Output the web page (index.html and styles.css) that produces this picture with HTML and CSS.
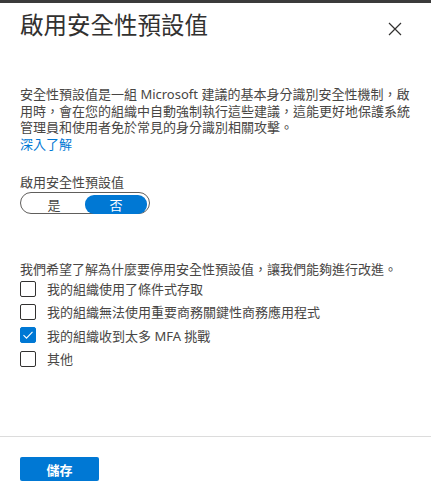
FILE: index.html
```html
<!DOCTYPE html>
<html lang="zh-Hant">
<head>
    <meta charset="UTF-8">
    <meta name="viewport" content="width=device-width, initial-scale=1.0">
    <title>啟用安全性預設值</title>
    <link rel="stylesheet" href="styles.css">
</head>
<body>
    <div class="top-bar"></div>
    <div class="panel">
        <div class="panel-body">
            <div class="header">
                <h1 class="title">啟用安全性預設值</h1>
                <button class="close-btn" aria-label="關閉">
                    <svg width="14" height="14" viewBox="0 0 14 14">
                        <path d="M1 1 L13 13 M13 1 L1 13" stroke="#323130" stroke-width="1.2" fill="none"/>
                    </svg>
                </button>
            </div>

            <p class="intro">安全性預設值是一組 Microsoft 建議的基本身分識別安全性機制，啟用時，會在您的組織中自動強制執行這些建議，這能更好地保護系統管理員和使用者免於常見的身分識別相關攻擊。</p>
            <a href="#" class="learn-more">深入了解</a>

            <div class="field">
                <div class="field-label">啟用安全性預設值</div>
                <div class="toggle">
                    <span class="toggle-option">是</span>
                    <span class="toggle-option active">否</span>
                </div>
            </div>

            <div class="feedback">
                <p class="question">我們希望了解為什麼要停用安全性預設值，讓我們能夠進行改進。</p>
                <label class="check-row"><span class="checkbox"></span>我的組織使用了條件式存取</label>
                <label class="check-row"><span class="checkbox"></span>我的組織無法使用重要商務關鍵性商務應用程式</label>
                <label class="check-row">
                    <span class="checkbox checked">
                        <svg width="12" height="12" viewBox="0 0 12 12">
                            <path d="M1.5 6.2 L4.5 9.2 L10.5 2.8" stroke="#fff" stroke-width="1.1" fill="none"/>
                        </svg>
                    </span>我的組織收到太多 MFA 挑戰
                </label>
                <label class="check-row"><span class="checkbox"></span>其他</label>
            </div>
        </div>

        <div class="footer">
            <button class="btn-primary">儲存</button>
        </div>
    </div>
</body>
</html>
```

FILE: styles.css
```css
* {
    margin: 0;
    padding: 0;
    box-sizing: border-box;
}

body {
    font-family: "Noto Sans", "Noto Sans CJK TC", sans-serif;
    background: #fff;
    color: #484644;
    font-size: 13px;
}

.top-bar {
    height: 3px;
    background: #3b3b3b;
}

.panel {
    height: 497px;
    display: flex;
    flex-direction: column;
}

.panel-body {
    flex: 1;
    padding: 0 16px 0 20px;
}

.header {
    display: flex;
    justify-content: space-between;
    align-items: center;
    padding-top: 6px;
}

.title {
    font-size: 23.5px;
    font-weight: 400;
    line-height: 32px;
    color: #323130;
}

.close-btn {
    background: none;
    border: none;
    width: 24px;
    height: 24px;
    display: flex;
    align-items: center;
    justify-content: center;
    margin-right: 8px;
    margin-top: 8px;
}

.intro {
    margin-top: 45px;
    line-height: 16.7px;
}

.learn-more {
    display: block;
    line-height: 16.7px;
    color: #0078d4;
    text-decoration: none;
}

.field {
    margin-top: 21px;
}

.field-label {
    line-height: 16px;
    margin-bottom: 2px;
}

.toggle {
    width: 130px;
    height: 22px;
    border: 1px solid #605e5c;
    border-radius: 11px;
    padding: 2px;
    display: grid;
    grid-template-columns: 1fr 1fr;
}

.toggle-option {
    display: flex;
    align-items: center;
    justify-content: center;
    border-radius: 9px;
    font-size: 13px;
}

.toggle-option.active {
    background: #0078d4;
    color: #fff;
}

.feedback {
    margin-top: 47px;
}

.question {
    line-height: 16px;
}

.check-row {
    display: flex;
    align-items: center;
    gap: 11px;
    height: 23.4px;
}

.checkbox {
    width: 16px;
    height: 16px;
    border: 1px solid #323130;
    border-radius: 2px;
    display: flex;
    align-items: center;
    justify-content: center;
    flex-shrink: 0;
}

.checkbox.checked {
    background: #0078d4;
    border-color: #0078d4;
}

.footer {
    border-top: 1px solid #dcdcdc;
    padding: 20px 20px 0;
    height: 64px;
}

.btn-primary {
    width: 79px;
    height: 24px;
    background: #0078d4;
    color: #fff;
    border: none;
    border-radius: 2px;
    font-family: inherit;
    font-size: 13px;
    font-weight: 700;
}
```
